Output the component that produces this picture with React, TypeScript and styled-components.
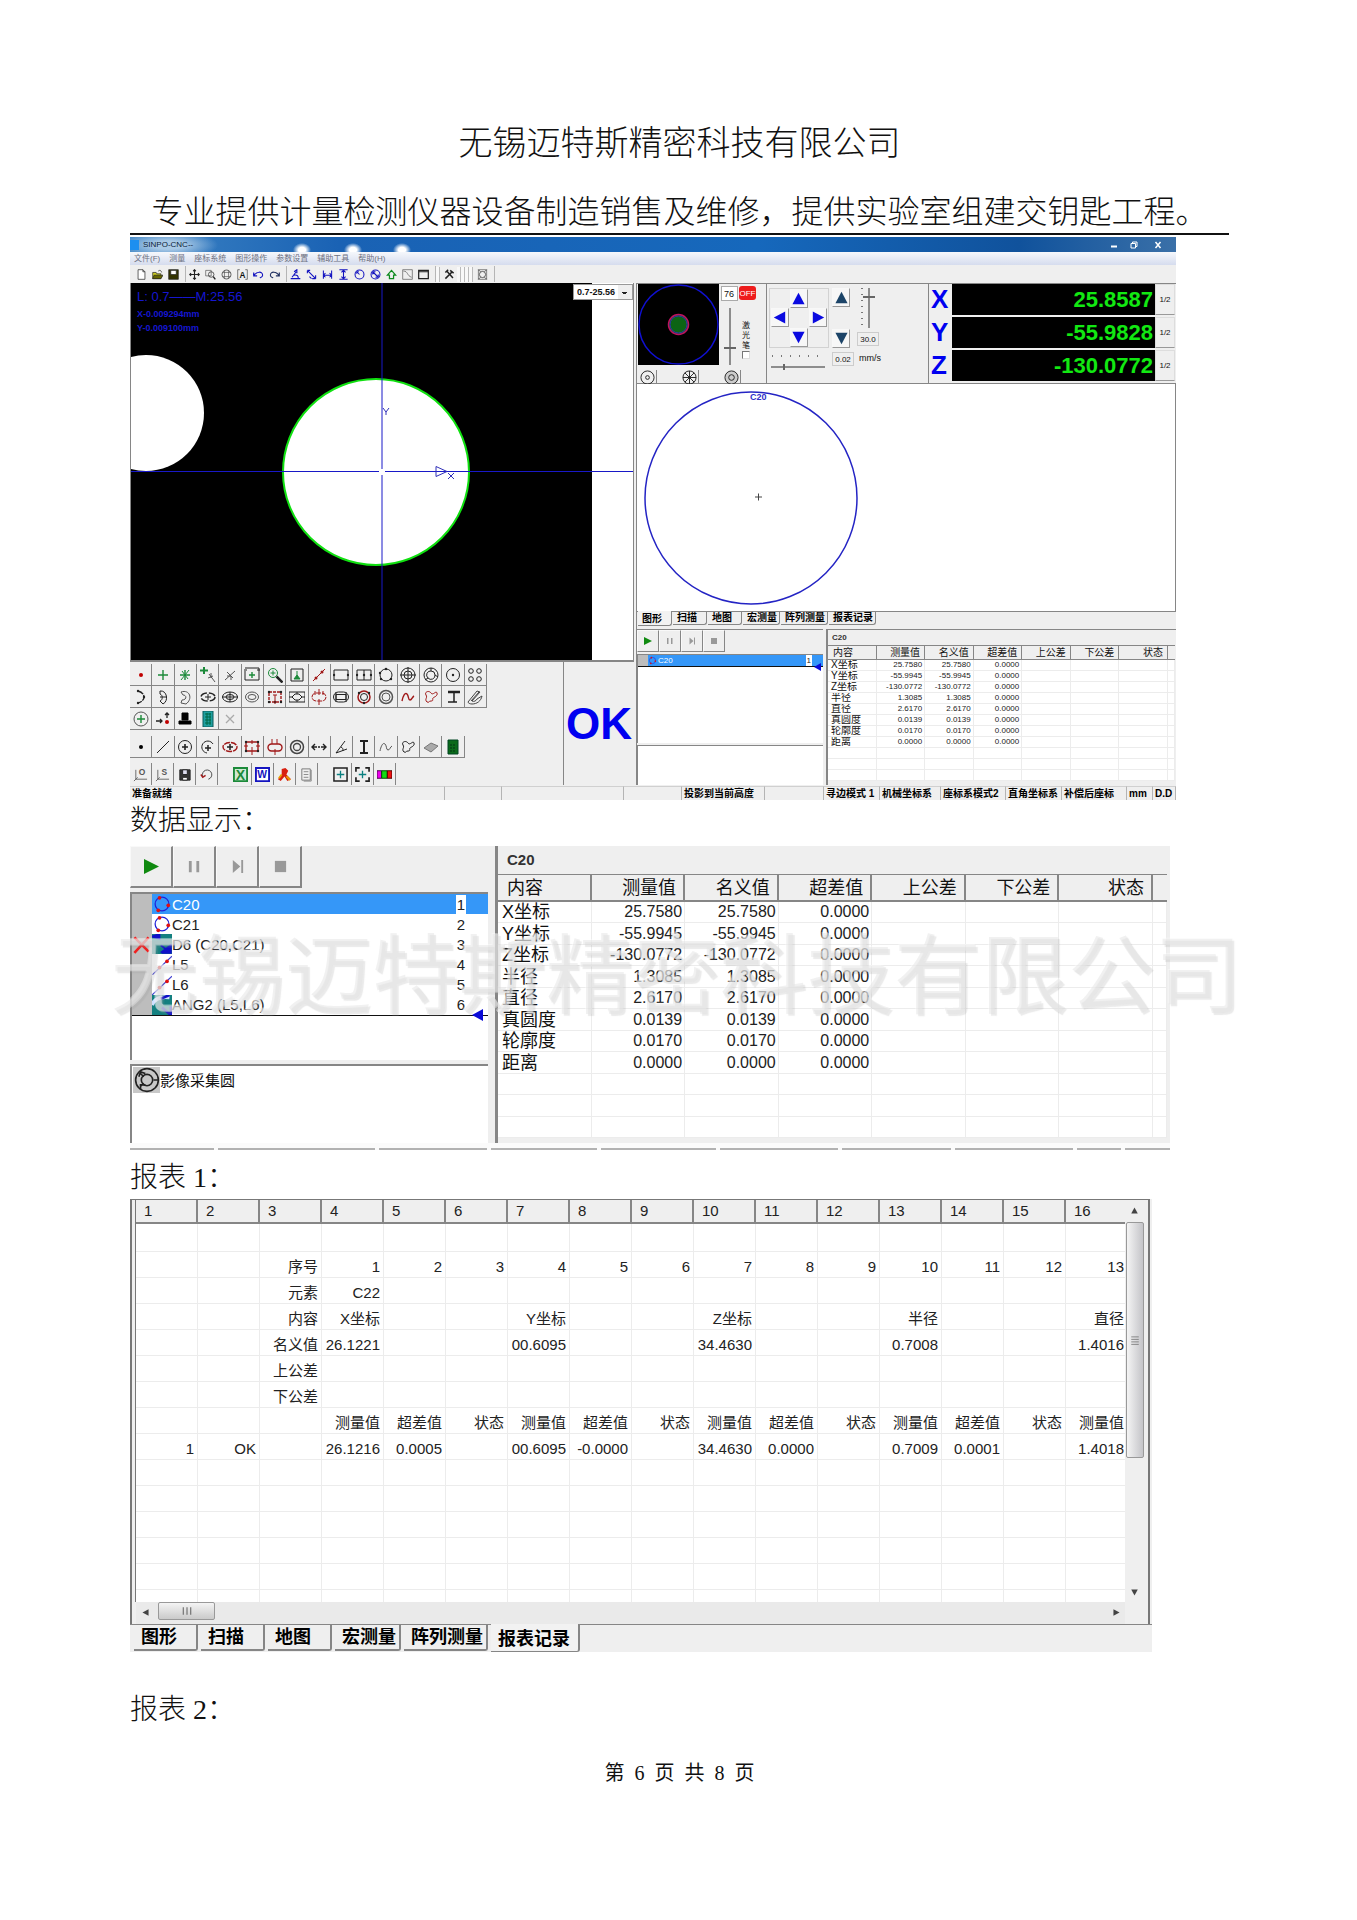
import React from "react";
import styled, { createGlobalStyle, css } from "styled-components";

const SANS = '"Liberation Sans", "Noto Sans CJK SC", sans-serif';
const SERIF = '"Liberation Serif", "Noto Sans CJK SC", serif';
const FACE = "#efefef";
const EDGE = "#868686";
const RULE = "#ececec";

const GlobalStyle = createGlobalStyle`
  *, *::before, *::after { box-sizing: border-box; }
  body { margin: 0; background: #fff; color: #111; font-family: ${SANS}; }
  button, input, select { font: inherit; color: inherit; margin: 0; padding: 0; border: 0; border-radius: 0; background: none; }
  svg { display: block; }
`;

/* ---------- page ---------- */

const Page = styled.main`
  padding: 120px 128px 132px 130px;
`;
const Letterhead = styled.header`
  border-bottom: 2px solid #111;
  margin-bottom: 2px;
  font-family: ${SERIF};
  font-weight: 300;
  text-align: center;
  white-space: nowrap;
`;
const Company = styled.h1`
  margin: 0 0 23px;
  font-size: 34px;
  line-height: 48px;
  font-weight: inherit;
`;
const Slogan = styled.p`
  margin: 0;
  font-size: 32px;
  line-height: 42px;
`;
const Caption = styled.h2<{ $before?: number; $after?: number }>`
  margin: ${(p) => p.$before ?? 0}px 0 ${(p) => p.$after ?? 0}px;
  font: 300 28px/42px ${SERIF};
`;
const PageNumber = styled.footer`
  display: flex;
  justify-content: center;
  gap: 10px;
  margin-top: 30px;
  font: 20px/24px ${SERIF};
`;

/* ---------- icons ---------- */

const K = "#222";
const R = "#a01818";
const G = "#1c8a3a";
const B = "#1414c0";

const Glyph = ({ size = 16, children }: { size?: number; children: React.ReactNode }) => (
  <svg width={size} height={size} viewBox="0 0 16 16" fill="none" stroke={K} strokeWidth={1} aria-hidden="true">
    {children}
  </svg>
);
const dots = (pts: number[][], c = K, r = 1.2) =>
  pts.map(([x, y], i) => <circle key={i} cx={x} cy={y} r={r} fill={c} stroke="none" />);

type Tool = [string, React.ReactNode];

const blob = "M4 13C1 10 5 9 3 6S6 1 8 4s5-3 6 0-3 4-4 5 1 3-2 3-1 2-4 1z";
const curve = "M2 12C3 7 5 3 7 5s1 6 3 6 2-3 4-4";
const star = "M8 5v6M5 8h6";

const rowA: Tool[] = [
  ["点", dots([[8, 8]], "#c00000", 2)],
  ["十字点", <path d="M8 3v10M3 8h10" stroke={G} strokeWidth={1.4} />],
  ["交点", <><path d="M3 8h10M8 3v10" stroke={G} strokeWidth={1.4} /><path d="M4 13l8-10M5 4l6 8" stroke={G} /></>],
  ["自动寻点", <><path d="M4 0v7M0 3.500h8" stroke={G} strokeWidth={2} /><path d="M9 7l6 8M8 11l5-2M11 6v5" stroke="#555" /></>],
  ["最近点", <path d="M3 13L13 4M5 5l6 6M5 9h4v4" stroke="#555" />],
  ["框选点", <><path d="M1 4v9h14V4M0 3h3M13 3h3M1 1h14v3" /><path d={star} stroke={G} strokeWidth={1.400} /></>],
  ["放大寻点", <><circle cx="6" cy="6" r="4.500" stroke={G} /><path d="M6 3.500v5M3.500 6h5" stroke={G} /><path d="M9.500 9.500l6 6" strokeWidth={2.500} /></>],
  ["对焦点", <><path d="M2 2h12v12H2z" /><path d="M8 4v6M5 12l3-4 3 4z" stroke={G} fill={G} /></>],
  ["直线", <><path d="M2 14L14 2" stroke={R} />{dots([[5, 11], [11, 5]], R, 1.500)}</>],
  ["框选线", <><path d="M1 3h14v10H1z" />{dots([[1, 8], [15, 8]])}</>],
  ["多段线", <><path d="M1 3h14v10H1zM8 3v10" />{dots([[1, 8], [15, 8], [8, 8]])}</>],
  ["圆", <><circle cx="8" cy="8" r="6" />{dots([[8, 2], [3, 12], [13, 12], [2, 6]])}</>],
  ["框选圆", <><circle cx="8" cy="8" r="7" /><circle cx="8" cy="8" r="4" /><path d="M8 0v16M0 8h16" /></>],
  ["采集圆", <><circle cx="8" cy="8" r="7" /><path d="M8 4a4 4 0 0 1 4 4l3 2M12 8a4 4 0 0 1-7 3l-3 2M5 11a4 4 0 0 1 3-7V1" /></>],
  ["圆心", <><circle cx="8" cy="8" r="6.500" />{dots([[8, 8]])}</>],
  ["多圆", <><circle cx="4" cy="4" r="2.300" /><circle cx="12" cy="4" r="2.300" /><circle cx="4" cy="12" r="2.300" /><circle cx="12" cy="12" r="2.300" /></>],
];
const rowB: Tool[] = [
  ["圆弧", <><path d="M5 2c8 2 8 10 0 12" strokeDasharray="6 1" strokeWidth={1.300} />{dots([[5, 2], [11, 8], [5, 14]])}</>],
  ["框选弧", <path d="M5 2c7-1 9 10 3 13l-3-3c3-1 3-6 0-7zM5 8h6" />],
  ["采集弧", <path d="M4 3c9-3 12 7 5 12l-5-1 1-3c5 0 5-5 1-5z" stroke="#555" />],
  ["椭圆", <><ellipse cx="8" cy="8" rx="7" ry="4" strokeDasharray="7 2" strokeWidth={1.500} /><path d={star} /></>],
  ["框选椭圆", <><ellipse cx="8" cy="8" rx="7.500" ry="5" /><ellipse cx="8" cy="8" rx="4" ry="2.500" /><path d="M8 3v10M0 8h16" /></>],
  ["采集椭圆", <><ellipse cx="8" cy="8" rx="6.500" ry="5" stroke="#555" /><ellipse cx="8" cy="8" rx="4" ry="2.500" stroke="#555" /></>],
  ["矩形", <><path d="M2 3h12v10H2z" stroke={R} strokeDasharray="3 1" strokeWidth={1.400} />{dots([[2, 3], [14, 3], [2, 13], [14, 13], [8, 13]])}<path d="M8 6v9M6 6h4" stroke={R} /></>],
  ["框选矩形", <><path d="M0 3h16v10H0zM3 8l3-3h4l3 3-3 3H6zM0 8h3M13 8h3M8 3v2M8 11v2" /></>],
  ["键槽", <><rect x="1" y="4" width="14" height="8" rx="4" stroke={R} strokeDasharray="5 1" /><path d="M8 0v6M8 10v6M4 2v4M12 2v4" stroke={R} /></>],
  ["框选键槽", <><rect x="0.500" y="3" width="15" height="10" rx="5" /><rect x="3" y="5.500" width="10" height="5" /><path d="M3 3v10M13 3v10" /></>],
  ["圆环", <><circle cx="8" cy="8" r="6" stroke={R} strokeWidth={1.500} /><circle cx="8" cy="8" r="3.500" />{dots([[3, 4], [13, 4], [8, 14]])}</>],
  ["同心圆", <><circle cx="8" cy="8" r="6.500" stroke="#555" strokeWidth={1.500} /><circle cx="8" cy="8" r="4" stroke="#555" /></>],
  ["曲线", <path d={curve} stroke={R} strokeWidth={1.400} />],
  ["封闭曲线", <path d={blob} stroke={R} />],
  ["高度", <><path d="M3 3h12" strokeWidth={2.500} /><path d="M9 3v10M3 13h9" strokeWidth={1.500} /></>],
  ["角度尺", <path d="M1 13l9-11 3 1-8 9c2 1 4 0 5-2l5-3c-1 5-5 8-10 8-2 0-4-1-4-2zM4 12L12 3" stroke="#444" />],
];
const rowC: Tool[] = [
  ["定位圆", <><circle cx="8" cy="8" r="7" stroke="#555" /><path d="M8 4v8M4 8h8" stroke={G} strokeWidth={1.400} /></>],
  ["移动", <><path d="M1 10h6M5 8l2 2-2 2M12 7V2M10 4l2-2 2 2" strokeWidth={1.300} />{dots([[12, 11]], "#c00000", 2)}</>],
  ["探针", <path d="M5 2h6v7h-6zM2 10h12v3H2z" fill="#000" stroke="#000" />],
  ["计算", <><path d="M3 0h10v16H3z" fill="#20a0a0" stroke="#0b5a5a" /><path d="M5 3h6M5 6h6M5 9h6M5 12h6M7 2v12M10 2v12" stroke="#064" /></>],
  ["删除", <path d="M4 4l8 8M12 4l-8 8" stroke="#aaa" strokeWidth={1.300} />],
];
const rowD: Tool[] = [
  ["构造点", dots([[8, 8]], "#000", 2)],
  ["构造线", <path d="M2 14L14 2" />],
  ["构造圆", <><circle cx="8" cy="8" r="6.500" /><path d="M8 5v6M5 8h6" strokeWidth={1.600} /></>],
  ["构造弧", <><path d="M7 14A6 6 0 1 1 13 5" /><path d="M8 6v6M5 9h6" strokeWidth={1.500} /></>],
  ["构造椭圆", <><ellipse cx="8" cy="8" rx="7" ry="4.500" stroke={R} strokeWidth={1.400} strokeDasharray="6 1" /><path d={star} strokeWidth={1.500} /></>],
  ["构造矩形", <><path d="M2 3h12v9H2z" stroke={R} strokeWidth={1.400} /><path d="M8 8v8M0 7h4M12 7h4M8 1v4" stroke={R} />{dots([[2, 3], [14, 3], [2, 12], [14, 12]])}</>],
  ["构造键槽", <><rect x="1" y="5" width="14" height="7" rx="3.500" stroke={R} strokeWidth={1.400} /><path d="M5 0v5M10 0v5M8 10v6" stroke={R} /></>],
  ["构造圆环", <><circle cx="8" cy="8" r="6.500" stroke="#444" strokeWidth={1.500} /><circle cx="8" cy="8" r="3.500" stroke="#444" strokeWidth={1.300} /></>],
  ["距离", <path d="M1 8h5M10 8h5M7 8h2M4 5L1 8l3 3M12 5l3 3-3 3" strokeWidth={1.400} />],
  ["角度", <path d="M12 2L3 14l11-4M8 8c2 1 2 2 2 4" />],
  ["高度差", <path d="M4 2h8M4 14h8M8 2v12" strokeWidth={2} />],
  ["构造曲线", <path d={curve} stroke="#555" />],
  ["构造封闭曲线", <path d={blob} />],
  ["平面", <path d="M1 9l7-5 7 3-7 6z" fill="#aaa" stroke="#777" />],
  ["计算器", <><path d="M3 1h10v14H3z" fill="#0a6a1a" stroke="#042" /><path d="M5 6h6M5 9h6M5 12h6" stroke="#031" strokeDasharray="2 1" /></>],
];
const letter = (t: string, x: number, y: number, size: number, fill: string) => (
  <text x={x} y={y} fontSize={size} fontWeight="bold" fill={fill} stroke="none" fontFamily="Liberation Sans">{t}</text>
);
const fileGroups: Tool[][] = [
  [
    ["原点", <><path d="M3 3v10h12M1 15l4-4" stroke="#666" />{letter("O", 6, 9, 9, "#555")}</>],
    ["坐标", <><path d="M3 3v10h12M1 15l4-4" stroke="#666" />{letter("S", 7, 9, 9, "#555")}</>],
    ["保存", <><path d="M3 3h11v11H3z" fill="#333" /><path d="M6 3h5v5H6z" fill="#dde" /><path d="M6 11h5v3H6z" fill="#fff" /></>],
    ["撤消", <><path d="M4 10A5 5 0 1 1 10 13" stroke="#444" /><path d="M2 8l2 3 3-2" stroke={R} strokeWidth={1.500} /></>],
  ],
  [
    ["Excel", <><path d="M1 1h14v14H1z" fill="#cfe8d4" stroke={G} strokeWidth={2} />{letter("X", 3, 14, 15, G)}</>],
    ["Word", <><path d="M1 1h14v14H1z" fill="#fff" stroke={B} strokeWidth={2} />{letter("W", 2.500, 12, 11, B)}</>],
    ["CAD", <><path d="M5 2l4-1 3 3-2 4 5 5-4 2-3-5-4 5-3-2 4-5z" fill="#d82010" stroke="none" /><path d="M10 10l4 4M2 12l3-4" stroke="#e8a000" strokeWidth={2} /></>],
    ["文本", <><path d="M3 2h9v12H3z" stroke="#777" /><path d="M5 5h5M5 8h5M5 11h5M13 3v12H5" stroke="#888" /></>],
  ],
  [
    ["取像", <><path d="M1 1h14v14H1z" strokeWidth={1.600} /><path d="M8 4v8M4 8h8" stroke="#0a8080" strokeWidth={1.400} /></>],
    ["全屏", <><path d="M1 5V1h4M11 1h4v4M15 11v4h-4M5 15H1v-4" strokeWidth={1.800} /><path d="M8 4v8M4 8h8" stroke="#0a8080" strokeWidth={1.400} /></>],
    ["颜色", <><path d="M0 4h5v8H0z" fill="#e0e" stroke="#404" /><path d="M5 4h6v8H5z" fill="#1d1" stroke="#040" /><path d="M11 4h5v8h-5z" fill="#e11" stroke="#400" /></>],
  ],
];

const mainTools: Tool[][] = [
  [
    ["新建", <path d="M3 1h7l3 3v11H3zM10 1v3h3" fill="#fff" />],
    ["打开", <><path d="M1 5h5l1 2h6v7H1z" fill="#cc2" /><path d="M3 9h13l-3 5H1z" fill="#660" /><path d="M9 3c3-2 4-1 5 2" /></>],
    ["保存", <><path d="M1 1h14v14H1z" fill="#330" /><path d="M4 2h8v6H4z" fill="#fff" /></>],
  ],
  [
    ["移动", <path d="M8 1v14M1 8h14M6 3l2-2 2 2M6 13l2 2 2-2M3 6L1 8l2 2M13 6l2 2-2 2" strokeWidth={1.600} />],
    ["框选放大", <><path d="M1 2h8v8H1z" stroke="#555" /><circle cx="9" cy="8" r="4" /><path d="M12 11l3 4" strokeWidth={2} /></>],
    ["缩放", <><circle cx="8" cy="8" r="6.500" /><path d="M2 5h12M2 11h12M5 2v12M11 2v12" stroke="#555" /></>],
    ["全部", <><path d="M4 1H1v14h3M12 1h3v14h-3" stroke="#444" />{letter("A", 3.500, 13, 12, "#111")}</>],
    ["撤消", <path d="M1 5v5h5M1 10c4-7 13-7 13-1 0 3-3 3-4 4" stroke={B} strokeWidth={1.600} />],
    ["重做", <path d="M15 5v5h-5M15 10C11 3 2 3 2 9c0 3 3 3 4 4" stroke="#203060" strokeWidth={1.600} />],
  ],
  [
    ["角度", <path d="M1 14h14M3 12l6-8M6 4l4-3v5M6 9c4-1 6 1 6 4" stroke={B} strokeWidth={1.600} />],
    ["距离", <path d="M2 2l4 4M2 2v4M2 2h4M6 6l8 8M14 14v-5M14 14H9M5 11l3 3" stroke={B} strokeWidth={1.600} />],
    ["水平距离", <path d="M2 2v12M14 2v12M2 9h12M5 6L2 9l3 3M11 6l3 3-3 3" stroke={B} strokeWidth={1.500} />],
    ["垂直距离", <path d="M2 1h12M2 15h12M8 2v12M5 5l3-3 3 3M5 11l3 3 3-3" stroke={B} strokeWidth={1.600} />],
    ["半径", <><circle cx="8" cy="8" r="6.500" stroke={B} strokeWidth={1.500} /><path d="M8 8L4 4M4 7V4h3" stroke={B} strokeWidth={1.500} /></>],
    ["直径", <><circle cx="8" cy="8" r="6.500" stroke={B} strokeWidth={1.500} /><path d="M4 4l8 8M4 8V4h4M12 8v4H8" stroke={B} strokeWidth={1.600} /></>],
    ["上移", <path d="M8 2l6 7h-3v5H5V9H2z" stroke="#0c8a1c" strokeWidth={1.800} />],
    ["曲线图", <path d="M1 1h14v14H1zM2 3c7 0 5 7 12 9" stroke="#555" />],
    ["窗口", <path d="M1 2h14v12H1zM1 4h14" strokeWidth={1.800} />],
  ],
];
const gearTool: Tool = ["设置", <path d="M2 14L12 4M4 3l9 10M9 2l5 4M2 5l4-4" strokeWidth={2.200} />];
const roundTool: Tool = ["视图", <><path d="M2 1h12v14H2z" stroke="#555" /><circle cx="8" cy="8" r="4.500" /><path d="M2 1l3 3M14 1l-3 3M2 15l3-3M14 15l-3-3" /></>];

/* ---------- application window ---------- */

const Window = styled.section`
  max-width: 1046px;
  background: ${FACE};
`;
const TitleBar = styled.div`
  display: flex;
  align-items: center;
  height: 15px;
  padding-right: 6px;
  color: #0c1c38;
  font-size: 8px;
  background:
    radial-gradient(ellipse 9px 7px at 172px 13px, #fff 40%, transparent),
    radial-gradient(ellipse 9px 7px at 223px 13px, #fff 40%, transparent),
    radial-gradient(ellipse 9px 7px at 272px 13px, #fff 40%, transparent),
    radial-gradient(ellipse 50px 14px at 38px 8px, #a9c9e6 30%, transparent),
    linear-gradient(90deg, #3d84c4, #1a62b4 20%, #1668bc 60%, #10529c 85%, #3a70a8);
`;
const AppMark = styled.span`
  width: 9px;
  height: 10px;
  margin-right: 4px;
  background: #1d8ff0;
`;
const WindowButtons = styled.div`
  display: flex;
  margin-left: auto;
  gap: 4px;
`;
const WindowButton = styled.button`
  width: 16px;
  height: 11px;
  display: grid;
  place-items: center;
`;
const CloseButton = styled(WindowButton)`
  width: 24px;
`;
const MenuBar = styled.nav`
  display: flex;
  align-items: center;
  gap: 9px;
  height: 13px;
  padding: 0 4px;
  color: #6d7080;
  font-size: 8px;
  line-height: 12px;
  background: linear-gradient(#f6f8fc, #d5dcee);
`;
const MenuItem = styled.button`
  line-height: 12px;
`;
const MainToolbar = styled.div`
  display: flex;
  align-items: center;
  height: 18px;
  padding-left: 3px;
`;
const ToolGroup = styled.div`
  display: flex;
  padding-right: 4px;
  border-right: 1px solid #b5b5b5;
`;
const ToolbarButton = styled.button`
  width: 16px;
  height: 16px;
  display: grid;
  place-items: center;
`;
const Grips = styled.span<{ $n: number }>`
  width: ${(p) => p.$n * 4}px;
  height: 15px;
  margin-right: 1px;
  background: repeating-linear-gradient(90deg, #f8f8f8 0 3px, #bbb 3px 4px);
`;
const Workspace = styled.div`
  display: grid;
  grid-template-columns: 506fr 540fr;
`;
const LeftColumn = styled.div`
  display: flex;
  flex-direction: column;
  min-width: 0;
  padding-right: 2px;
`;
const RightColumn = styled.div`
  display: flex;
  flex-direction: column;
  min-width: 0;
  border-left: 1px solid ${EDGE};
`;

const Camera = styled.div`
  position: relative;
  height: 379px;
  border: 1px solid ${EDGE};
  border-width: 0 1px 2px;
  background: #fff;
  overflow: hidden;
`;
const CameraView = styled.svg`
  width: 100%;
  height: 100%;
`;
const CameraInfo = styled.div`
  position: absolute;
  left: 6px;
  top: 7px;
  color: #1616d0;
  font-size: 9px;
  font-weight: bold;
  line-height: 14px;
`;
const ScaleRange = styled.div`
  margin-bottom: 3px;
  font-size: 13px;
  font-weight: normal;
`;
const LensSelect = styled.select`
  position: absolute;
  right: 0;
  top: 1px;
  width: 60px;
  height: 16px;
  padding-left: 3px;
  border: 1px solid #999;
  background: linear-gradient(#222, #222) right 5px center / 5px 1px no-repeat,
    linear-gradient(#222, #222) right 6px top 8px / 3px 1px no-repeat,
    linear-gradient(${FACE}, ${FACE}) right center / 14px 100% no-repeat, #fff;
  appearance: none;
  font-size: 9px;
  font-weight: bold;
  line-height: 12px;
`;

const Toolbox = styled.div`
  display: grid;
  grid-template-columns: minmax(0, 1fr) 70px;
  height: 123px;
`;
const ToolRows = styled.div`
  padding-top: 2px;
  border-right: 1px solid ${EDGE};
`;
const ToolRow = styled.div<{ $gap?: number }>`
  display: grid;
  grid-template-columns: repeat(16, minmax(0, 1fr));
  max-width: 357px;
  margin-top: ${(p) => p.$gap ?? 0}px;
`;
const ToolCell = styled.button`
  display: grid;
  place-items: center;
  height: 22px;
  border-right: 1px solid ${EDGE};
  border-bottom: 1px solid ${EDGE};
`;
const FileRow = styled.div`
  display: flex;
  gap: 12px;
  margin-top: 5px;
`;
const FileGroup = styled.div`
  display: flex;
`;
const FileCell = styled.button`
  display: grid;
  place-items: center;
  width: 22px;
  height: 22px;
  border-right: 1px solid ${EDGE};
`;
const Verdict = styled.output`
  display: grid;
  place-items: center;
  color: #0000f0;
  font-size: 44px;
  font-weight: bold;
  line-height: 48px;
`;

/* ---------- motion and readout ---------- */

const Controls = styled.div`
  display: grid;
  grid-template-columns: 130px 162px minmax(0, 1fr);
  height: 101px;
  border-top: 1px solid ${EDGE};
  border-bottom: 1px solid ${EDGE};
`;
const LightPanel = styled.div`
  display: grid;
  grid-template-columns: 81px 1fr;
  grid-template-rows: 81px 1fr;
  padding-left: 1px;
  border-right: 1px solid ${EDGE};
`;
const LightSide = styled.div`
  display: grid;
  grid-template-columns: 17px 17px;
  grid-template-rows: 18px 1fr;
  gap: 4px 1px;
  padding: 2px 0 0 2px;
`;
const LevelInput = styled.input`
  width: 17px;
  height: 15px;
  padding-left: 2px;
  border: 1px solid #aaa;
  background: #fff;
  font-size: 9px;
`;
const OffButton = styled.button`
  width: 17px;
  height: 14px;
  border-radius: 3px;
  background: #ee1c1c;
  color: #fff;
  font-size: 8px;
`;
const sliderReset = css`
  appearance: none;
  background: none;
  &::-webkit-slider-runnable-track { background: #8d8d8d; }
  &::-webkit-slider-thumb { appearance: none; background: #666; }
`;
const VerticalRange = styled.input`
  ${sliderReset}
  writing-mode: vertical-lr;
  width: 12px;
  height: 100%;
  justify-self: center;
  &::-webkit-slider-runnable-track { width: 2px; }
  &::-webkit-slider-thumb { width: 12px; height: 2px; margin-left: -5px; }
`;
const HorizontalRange = styled.input`
  ${sliderReset}
  width: 100%;
  height: 8px;
  &::-webkit-slider-runnable-track { height: 2px; }
  &::-webkit-slider-thumb { width: 2px; height: 6px; margin-top: -2px; }
`;
const LaserLabel = styled.label`
  display: flex;
  flex-direction: column;
  align-items: center;
  justify-content: flex-end;
  width: 14px;
  padding-bottom: 6px;
  font-size: 8px;
  line-height: 10px;
  text-align: center;
`;
const LaserCheck = styled.input`
  appearance: none;
  width: 8px;
  height: 8px;
  border: 1px solid #777;
  border-color: #777 #ddd #ddd #777;
  background: #fff;
`;
const LampRow = styled.div`
  grid-column: 1 / -1;
  display: flex;
  align-items: end;
`;
const LampButton = styled.button<{ $end?: boolean }>`
  display: grid;
  place-items: center;
  width: 19px;
  height: 15px;
  margin-right: ${(p) => (p.$end ? 0 : 23)}px;
  border-right: 1px solid ${EDGE};
  overflow: hidden;
`;
const JogPanel = styled.div`
  display: grid;
  grid-template-columns: 60px 22px 44px;
  grid-template-rows: 60px 1fr;
  gap: 4px 3px;
  padding: 4px 0 10px 2px;
  border-right: 1px solid ${EDGE};
`;
const JogPad = styled.div`
  display: grid;
  grid-template-columns: repeat(3, 1fr);
  border: 1px solid #d2d2d2;
  place-items: center;
`;
const JogButton = styled.button<{ $col?: number; $row?: number }>`
  grid-column: ${(p) => p.$col};
  grid-row: ${(p) => p.$row};
  display: grid;
  place-items: center;
  width: 18px;
  height: 19px;
  border: 1px solid #f8f8f8;
  border-right-color: #999;
  border-bottom-color: #999;
  background: #f7f7f7;
`;
const ZButtons = styled.div`
  display: flex;
  flex-direction: column;
  justify-content: space-between;
`;
const SpeedColumn = styled.div`
  display: grid;
  grid-template-rows: 40px 14px;
  gap: 4px;
  justify-items: center;
  width: 22px;
`;
const TickedVertical = styled.div`
  display: flex;
  gap: 1px;
  height: 40px;
  padding-left: 2px;
  background: repeating-linear-gradient(#777 0 1px, transparent 1px 6px) left top / 2px 40px no-repeat;
`;
const TickedHorizontal = styled.div`
  padding: 5px 4px 0 2px;
  background: repeating-linear-gradient(90deg, #777 0 1px, transparent 1px 9px) 3px 3px / 54px 2px no-repeat;
`;
const SmallField = styled.input`
  width: 22px;
  height: 14px;
  border: 1px solid #ccc;
  font-size: 8px;
  text-align: center;
`;
const Unit = styled.span`
  padding-left: 2px;
  font-size: 9px;
  line-height: 12px;
`;
const Readout = styled.div`
  display: grid;
  grid-template-rows: repeat(3, 31px);
  gap: 2px;
  padding: 0 1px;
`;
const AxisRow = styled.div`
  display: grid;
  grid-template-columns: 22px minmax(0, 1fr) 20px;
`;
const AxisName = styled.span`
  padding-left: 1px;
  color: #0000f0;
  font-size: 26px;
  font-weight: bold;
  line-height: 31px;
`;
const AxisValue = styled.output`
  padding-right: 2px;
  background: #000;
  color: #12e812;
  font-size: 22px;
  font-weight: bold;
  line-height: 31px;
  text-align: right;
`;
const HalfButton = styled.button`
  border: 1px solid #ddd;
  border-bottom-color: #999;
  font-size: 8px;
`;
const Drawing = styled.svg`
  width: 100%;
  height: 227px;
  border-right: 1px solid ${EDGE};
  background: #fff;
`;

/* ---------- tabs ---------- */

type Sized = { $small?: boolean };

const TabBar = styled.div<Sized>`
  display: flex;
  align-items: flex-start;
  gap: ${(p) => (p.$small ? 1 : 3)}px;
  height: ${(p) => (p.$small ? 18 : 28)}px;
  padding-left: ${(p) => (p.$small ? 1 : 4)}px;
  border-top: 1px solid ${EDGE};
  background: ${FACE};
`;
const Tab = styled.button<Sized & { $active?: boolean }>`
  min-width: ${(p) => (p.$small ? 34 : 64)}px;
  height: ${(p) => (p.$small ? 13 : 26)}px;
  padding: ${(p) => (p.$small ? "0 2px 0 4px" : "0 3px 0 7px")};
  border: 1px solid ${EDGE};
  border-width: 0 ${(p) => (p.$small ? "1px 1px" : "2px 2px")} 0;
  border-bottom-right-radius: 3px;
  color: #000;
  font-size: ${(p) => (p.$small ? 10 : 18)}px;
  font-weight: bold;
  line-height: ${(p) => (p.$small ? 12 : 24)}px;
  text-align: left;
  white-space: nowrap;
  ${(p) =>
    p.$active &&
    css`
      margin-top: -1px;
      height: ${p.$small ? 15 : 28}px;
      padding: ${p.$small ? "1px 2px 0 4px" : "2px 8px 0 7px"};
      border-bottom-width: 1px;
      background: #f2f2f2;
    `}
`;
const TABS = ["图形", "扫描", "地图", "宏测量", "阵列测量", "报表记录"];

const Tabs = ({ active, small }: { active: string; small?: boolean }) => (
  <TabBar role="tablist" $small={small}>
    {TABS.map((t) => (
      <Tab key={t} role="tab" aria-selected={t === active} $active={t === active} $small={small}>
        {t}
      </Tab>
    ))}
  </TabBar>
);

/* ---------- element list and result table ---------- */

const ResultPanel = styled.div<Sized>`
  display: grid;
  grid-template-columns: ${(p) => (p.$small ? "189fr 350fr" : "365fr 675fr")};
  height: ${(p) => (p.$small ? 156 : 297)}px;
  background: ${FACE};
`;
const ListSide = styled.div<Sized>`
  display: flex;
  flex-direction: column;
  gap: ${(p) => (p.$small ? 2 : 4)}px;
  min-width: 0;
  padding-right: ${(p) => (p.$small ? 3 : 7)}px;
`;
const Transport = styled.div<Sized>`
  display: flex;
  border-top: ${(p) => (p.$small ? 1 : 0)}px solid ${EDGE};
`;
const TransportButton = styled.button<Sized>`
  display: grid;
  place-items: center;
  width: ${(p) => (p.$small ? 22 : 43)}px;
  height: ${(p) => (p.$small ? 22 : 42)}px;
  border: 1px solid #f9f9f9;
  border-right: ${(p) => (p.$small ? 1 : 2)}px solid ${EDGE};
  border-bottom: ${(p) => (p.$small ? 1 : 2)}px solid ${EDGE};
`;
const ListBox = styled.div<Sized>`
  position: relative;
  flex: 1;
  border-left: ${(p) => (p.$small ? 1 : 2)}px solid ${EDGE};
  border-top: ${(p) => (p.$small ? 1 : 2)}px solid ${EDGE};
  background: #fff;
`;
const Elements = styled.ul<Sized & { $rows: number }>`
  display: grid;
  grid-template-rows: repeat(${(p) => p.$rows}, 1fr);
  height: ${(p) => (p.$small ? 12 : 122)}px;
  margin: 0;
  padding: 0;
  list-style: none;
  border-bottom: 1px solid #111;
`;
const Element = styled.li<Sized & { $selected?: boolean }>`
  display: grid;
  grid-template-columns: ${(p) => (p.$small ? "10px 10px 1fr auto" : "20px 20px 1fr auto")};
  align-items: center;
  padding-right: ${(p) => (p.$small ? 11 : 22)}px;
  font-size: ${(p) => (p.$small ? 8 : 15)}px;
  line-height: ${(p) => (p.$small ? 11 : 19)}px;
  color: ${(p) => (p.$selected ? "#fff" : "#222")};
  background: linear-gradient(90deg, #bdbdbd ${(p) => (p.$small ? 10 : 20)}px, ${(p) => (p.$selected ? "#3597f8" : "#fff")} 0);
`;
const Index = styled.span<{ $selected?: boolean }>`
  padding: 0 1px;
  color: #222;
  background: ${(p) => (p.$selected ? "#fff" : "none")};
`;
const InsertMark = styled.span<Sized>`
  position: absolute;
  right: ${(p) => (p.$small ? 2 : 5)}px;
  top: ${(p) => (p.$small ? 8 : 115)}px;
  border: solid transparent;
  border-width: ${(p) => (p.$small ? "4px 7px 4px 0" : "6px 11px 6px 0")};
  border-right-color: #0a0ad8;
`;
const Method = styled.div<Sized>`
  display: flex;
  align-items: flex-start;
  height: ${(p) => (p.$small ? 40 : 79)}px;
  padding: 1px;
  border-left: ${(p) => (p.$small ? 1 : 2)}px solid ${EDGE};
  border-top: ${(p) => (p.$small ? 1 : 2)}px solid ${EDGE};
  background: #fff;
  font-size: 15px;
  line-height: 27px;
`;
const MethodIcon = styled.span`
  display: grid;
  place-items: center;
  width: 27px;
  height: 26px;
  background: #c8c8c8;
`;
const TableSide = styled.div<Sized>`
  min-width: 0;
  padding-right: ${(p) => (p.$small ? 1 : 3)}px;
  border-left: ${(p) => (p.$small ? 2 : 3)}px solid ${EDGE};
  border-top: ${(p) => (p.$small ? 1 : 0)}px solid ${EDGE};
`;
const ResultTitle = styled.h3<Sized>`
  margin: 0;
  padding-left: ${(p) => (p.$small ? 4 : 9)}px;
  color: #333;
  font-size: ${(p) => (p.$small ? 8 : 15)}px;
  line-height: ${(p) => (p.$small ? 15 : 28)}px;
`;
const ResultTable = styled.table<Sized>`
  width: 100%;
  table-layout: fixed;
  border-collapse: separate;
  border-spacing: 0;
  background: #fff;
  white-space: nowrap;
  th, td {
    padding: 0;
    overflow: hidden;
    font-weight: normal;
    line-height: ${(p) => (p.$small ? 10 : 20)}px;
  }
  thead th {
    height: ${(p) => (p.$small ? 15 : 28)}px;
    padding-right: ${(p) => (p.$small ? 4 : 7)}px;
    border: solid ${EDGE};
    border-width: 1px ${(p) => (p.$small ? "1px 1px" : "2px 2px")} 0;
    background: ${FACE};
    font-size: ${(p) => (p.$small ? 10 : 18)}px;
    text-align: right;
  }
  thead th:first-child { padding-left: ${(p) => (p.$small ? 5 : 9)}px; text-align: left; }
  thead th:last-child { border-right: 0; }
  tbody th, tbody td {
    height: ${(p) => (p.$small ? 11 : 21)}px;
    border-right: 1px solid ${RULE};
    border-bottom: 1px solid ${RULE};
  }
  tbody tr:nth-child(even) th { height: ${(p) => (p.$small ? 11 : 22)}px; }
  tbody th { padding-left: ${(p) => (p.$small ? 3 : 4)}px; font-size: ${(p) => (p.$small ? 10 : 18)}px; text-align: left; }
  tbody td { padding-right: 2px; color: #222; font-size: ${(p) => (p.$small ? 8 : 16)}px; text-align: right; }
`;
const FillColumn = styled.col<Sized>`
  width: ${(p) => (p.$small ? 7 : 14)}px;
`;

const RESULT_HEAD = ["内容", "测量值", "名义值", "超差值", "上公差", "下公差", "状态", ""];
const RESULTS = [
  ["X坐标", "25.7580", "25.7580", "0.0000"],
  ["Y坐标", "-55.9945", "-55.9945", "0.0000"],
  ["Z坐标", "-130.0772", "-130.0772", "0.0000"],
  ["半径", "1.3085", "1.3085", "0.0000"],
  ["直径", "2.6170", "2.6170", "0.0000"],
  ["真圆度", "0.0139", "0.0139", "0.0000"],
  ["轮廓度", "0.0170", "0.0170", "0.0000"],
  ["距离", "0.0000", "0.0000", "0.0000"],
  [],
  [],
  [],
];

const circleIcon = <><circle cx="8" cy="8" r="5.500" stroke="#2020d8" />{dots([[6, 3], [13, 9], [5, 13]], "#e01010", 1.500)}</>;
const lineIcon = <><path d="M0 16L16 1" stroke="#4040d0" />{dots([[6, 10], [12, 5]], "#e01010", 1.500)}</>;
const distIcon = <><path d="M-2-2h20v20H-2z" fill="#148080" stroke="none" /><path d="M0 2l6-2v4zM7 9l8 6M15 8v7H8M7 15l8-6" stroke="#1010c8" fill="#1010c8" strokeWidth={1.500} /></>;
const angleIcon = <><path d="M-2-2h20v20H-2z" fill="#148080" stroke="none" /><path d="M0 8c2-5 6-7 14-6" stroke="#cfe0ff" strokeWidth={3} /><path d="M7 3l7-3M8 10l7 6M15 9v7" stroke="#1010c8" strokeWidth={2} /></>;

type ElementRow = { name: string; icon: React.ReactNode; error?: boolean };
const ELEMENTS: ElementRow[] = [
  { name: "C20", icon: circleIcon },
  { name: "C21", icon: circleIcon },
  { name: "D6 (C20,C21)", icon: distIcon, error: true },
  { name: "L5", icon: lineIcon },
  { name: "L6", icon: lineIcon },
  { name: "ANG2 (L5,L6)", icon: angleIcon },
];
const transport: Tool[] = [
  ["运行", <path d="M0 0l16 8-16 8z" fill="#108a10" stroke="none" />],
  ["暂停", <path d="M2 2h3v12H2zM10 2h3v12h-3z" fill="#999" stroke="none" />],
  ["单步", <path d="M3 1l8 7-8 7zM12 1h2v14h-2z" fill="#999" stroke="none" />],
  ["停止", <path d="M2 2h12v12H2z" fill="#999" stroke="none" />],
];

const Results = ({ rows, method, small }: { rows: ElementRow[]; method?: string; small?: boolean }) => (
  <ResultPanel $small={small}>
    <ListSide $small={small}>
      <Transport $small={small}>
        {transport.map(([name, icon]) => (
          <TransportButton key={name} aria-label={name} $small={small}>
            <Glyph size={small ? 8 : 15}>{icon}</Glyph>
          </TransportButton>
        ))}
      </Transport>
      <ListBox $small={small}>
        <Elements $small={small} $rows={rows.length}>
          {rows.map((r, i) => (
            <Element key={r.name} $small={small} $selected={i === 0}>
              {r.error ? <Glyph size={19}><path d="M2 2l12 12M14 2L2 15" stroke="#f02020" strokeWidth={2.200} /></Glyph> : <span />}
              <Glyph size={small ? 9 : 20}>{r.icon}</Glyph>
              <span>{r.name}</span>
              <Index $selected={i === 0}>{i + 1}</Index>
            </Element>
          ))}
        </Elements>
        <InsertMark $small={small} />
      </ListBox>
      <Method $small={small}>
        {method && (
          <>
            <MethodIcon>
              <Glyph size={26}>
                <circle cx="8" cy="8" r="7" />
                <circle cx="8" cy="8" r="3.500" />
                <path d="M4 4l2 2M4 12l2-2M12 8h3M3 6l1-3 3 1M4 14v-3h3" />
              </Glyph>
            </MethodIcon>
            {method}
          </>
        )}
      </Method>
    </ListSide>
    <TableSide $small={small}>
      <ResultTitle $small={small}>C20</ResultTitle>
      <ResultTable $small={small}>
        <colgroup>
          {RESULT_HEAD.slice(1).map((_, i) => <col key={i} />)}
          <FillColumn $small={small} />
        </colgroup>
        <thead>
          <tr>{RESULT_HEAD.map((h, i) => <th key={i} scope="col">{h}</th>)}</tr>
        </thead>
        <tbody>
          {RESULTS.map((r, i) => (
            <tr key={i}>
              <th scope="row">{r[0]}</th>
              {RESULT_HEAD.slice(1).map((_, j) => <td key={j}>{r[j + 1]}</td>)}
            </tr>
          ))}
        </tbody>
      </ResultTable>
    </TableSide>
  </ResultPanel>
);

/* ---------- status bar ---------- */

const StatusBar = styled.div`
  display: grid;
  grid-template-columns: 315fr 57fr 122fr 58fr 83fr 59fr 56fr 61fr 65fr 56fr 65fr 26fr 23fr;
  height: 15px;
  padding-top: 1px;
  color: #000;
  font-size: 10px;
  font-weight: bold;
  line-height: 13px;
  white-space: nowrap;
`;
const Status = styled.span`
  min-width: 0;
  padding-left: 2px;
  border-top: 1px solid #d0d0d0;
  border-right: 1px solid #b4b4b4;
`;
const STATUS = [
  "准备就绪", "", "", "", "投影到当前高度", "", "寻边模式 1",
  "机械坐标系", "座标系模式2", "直角坐标系", "补偿后座标", "mm", "D.D",
];

/* ---------- enlarged data view ---------- */

const DataView = styled.section`
  position: relative;
  max-width: 1040px;
  background: ${FACE};
`;
const Watermark = styled.div`
  position: absolute;
  left: -19px;
  top: 73px;
  color: rgba(228, 228, 228, 0.5);
  font: 87px/100px "Noto Sans CJK SC", sans-serif;
  text-shadow: 2px 2px 1px rgba(150, 150, 150, 0.2), -1px -1px 0 rgba(255, 255, 255, 0.4);
  white-space: nowrap;
  pointer-events: none;
`;
const CutStatus = styled.div`
  display: flex;
  gap: 4px;
  padding-top: 5px;
  height: 7px;
  background: #fbfbfb;
`;
const CutSegment = styled.span<{ $w: number }>`
  flex: ${(p) => p.$w} 1 0;
  height: 2px;
  background: #b2b2b2;
`;

/* ---------- report ---------- */

const Report = styled.section`
  max-width: 1022px;
  background: ${FACE};
`;
const ReportFrame = styled.div`
  display: grid;
  grid-template-columns: minmax(0, 1fr) 19px;
  grid-template-rows: 402px 22px;
  margin-right: 2px;
  padding-right: 4px;
  border: solid #777;
  border-width: 1px 2px 0 2px;
`;
const ReportGrid = styled.div`
  margin-left: 3px;
  border-left: 1px solid #777;
  overflow: hidden;
  background: #fff;
`;
const ReportTable = styled.table`
  width: 992px;
  table-layout: fixed;
  border-collapse: separate;
  border-spacing: 0;
  color: #222;
  font-size: 15px;
  white-space: nowrap;
  th, td { padding: 0; font-weight: normal; overflow: hidden; }
  thead th {
    height: 24px;
    padding-left: 8px;
    border: solid ${EDGE};
    border-width: 0 2px 2px 0;
    background: ${FACE};
    font-size: 15px;
    line-height: 20px;
    text-align: left;
  }
  tbody td {
    height: 26px;
    padding: 4px 3px 0 0;
    border-right: 1px solid ${RULE};
    border-bottom: 1px solid ${RULE};
    line-height: 20px;
    text-align: right;
  }
  tbody tr:first-child td { height: 28px; }
`;
const VScroll = styled.div`
  display: flex;
  flex-direction: column;
  align-items: center;
  background: ${FACE};
`;
const HScroll = styled.div`
  display: flex;
  align-items: flex-start;
  margin-left: 4px;
  background: #eaeaea;
`;
const ArrowButton = styled.button`
  display: grid;
  place-items: center;
  width: 18px;
  height: 20px;
  flex: none;
`;
const Thumb = styled.div<{ $vertical?: boolean }>`
  display: grid;
  place-items: center;
  border: 1px solid #999;
  border-radius: 2px;
  ${(p) =>
    p.$vertical
      ? css`width: 18px; height: 236px; margin-top: 2px; background: linear-gradient(90deg, #f4f4f4, #c4c4c8);`
      : css`width: 57px; height: 18px; margin-left: 4px; background: linear-gradient(#f4f4f4, #cacaca);`}
`;
const Spacer = styled.div`
  flex: 1;
`;

const row = (cells: Record<number, string>) => Array.from({ length: 16 }, (_, i) => cells[i + 1] ?? "");
const numbering: Record<number, string> = { 3: "序号" };
for (let i = 1; i <= 13; i++) numbering[i + 3] = String(i);
const headings: Record<number, string> = {};
["测量值", "超差值", "状态"].forEach((h, k) => {
  for (let c = 4 + k; c <= 16; c += 3) headings[c] = h;
});
const REPORT = [
  row({}),
  row(numbering),
  row({ 3: "元素", 4: "C22" }),
  row({ 3: "内容", 4: "X坐标", 7: "Y坐标", 10: "Z坐标", 13: "半径", 16: "直径" }),
  row({ 3: "名义值", 4: "26.1221", 7: "00.6095", 10: "34.4630", 13: "0.7008", 16: "1.4016" }),
  row({ 3: "上公差" }),
  row({ 3: "下公差" }),
  row(headings),
  row({ 1: "1", 2: "OK", 4: "26.1216", 5: "0.0005", 7: "00.6095", 8: "-0.0000", 10: "34.4630", 11: "0.0000", 13: "0.7009", 14: "0.0001", 16: "1.4018" }),
  ...Array.from({ length: 6 }, () => row({})),
];

const MENU = ["文件(F)", "测量", "座标系统", "图形操作", "参数设置", "辅助工具", "帮助(H)"];
const AXES = [["X", "25.8587"], ["Y", "-55.9828"], ["Z", "-130.0772"]];

const ToolbarTool = ({ tool: [name, icon] }: { tool: Tool }) => (
  <ToolbarButton aria-label={name}><Glyph size={11}>{icon}</Glyph></ToolbarButton>
);
const ToolStrip = ({ tools, gap }: { tools: Tool[]; gap?: number }) => (
  <ToolRow $gap={gap}>
    {tools.map(([name, icon]) => (
      <ToolCell key={name} aria-label={name}><Glyph>{icon}</Glyph></ToolCell>
    ))}
  </ToolRow>
);
const Arrow = ({ turn = 0, size = 13, color = "#0a0ae0" }) => (
  <svg width={size} height={size} viewBox="0 0 16 16" aria-hidden="true">
    <path d="M8 1l7.500 14H.5z" fill={color} transform={`rotate(${turn} 8 8)`} />
  </svg>
);

export default function App() {
  return (
    <Page>
      <GlobalStyle />
      <Letterhead>
        <Company>无锡迈特斯精密科技有限公司</Company>
        <Slogan>专业提供计量检测仪器设备制造销售及维修，提供实验室组建交钥匙工程。</Slogan>
      </Letterhead>

      <Window>
        <TitleBar>
          <AppMark />
          SINPO-CNC--
          <WindowButtons>
            <WindowButton aria-label="最小化"><Glyph size={8}><path d="M2 11h12" stroke="#fff" strokeWidth={4} /></Glyph></WindowButton>
            <WindowButton aria-label="还原"><Glyph size={8}><path d="M2 5h9v9H2zM5 4V2h9v9h-2" stroke="#fff" strokeWidth={2} /></Glyph></WindowButton>
            <CloseButton aria-label="关闭"><Glyph size={8}><path d="M3 2l10 12M13 2L3 14" stroke="#fff" strokeWidth={3} /></Glyph></CloseButton>
          </WindowButtons>
        </TitleBar>
        <MenuBar>{MENU.map((m) => <MenuItem key={m}>{m}</MenuItem>)}</MenuBar>
        <MainToolbar>
          {mainTools.map((group, i) => (
            <ToolGroup key={i}>{group.map((t) => <ToolbarTool key={t[0]} tool={t} />)}</ToolGroup>
          ))}
          <Grips $n={1} />
          <ToolbarTool tool={gearTool} />
          <Grips $n={4} />
          <ToolGroup><ToolbarTool tool={roundTool} /></ToolGroup>
        </MainToolbar>

        <Workspace>
          <LeftColumn>
            <Camera>
              <CameraView viewBox="0 0 502 377" preserveAspectRatio="xMinYMin slice" fill="none">
                <path d="M0 0h461v377H0z" fill="#000" />
                <circle cx="15" cy="130" r="58" fill="#fff" />
                <circle cx="245" cy="189" r="93" fill="#fff" stroke="#10e010" strokeWidth="2" />
                <path d="M251 0v186M251 192v185M0 188.500h248M254 188.500h248" stroke="#1818c8" />
                <path d="M305 183.500v10l11-5z" stroke="#3030b8" />
                <path d="M252 125l3 4 3-4M255 129v3M317 190l6 6M323 190l-6 6" stroke="#3030b8" />
              </CameraView>
              <CameraInfo>
                <ScaleRange>L: 0.7——M:25.56</ScaleRange>
                <div>X-0.009294mm</div>
                <div>Y-0.009100mm</div>
              </CameraInfo>
              <LensSelect aria-label="镜头倍率" defaultValue="0.7-25.56"><option>0.7-25.56</option></LensSelect>
            </Camera>
            <Toolbox>
              <ToolRows>
                <ToolStrip tools={rowA} />
                <ToolStrip tools={rowB} />
                <ToolStrip tools={rowC} />
                <ToolStrip tools={rowD} gap={6} />
                <FileRow>
                  {fileGroups.map((g, i) => (
                    <FileGroup key={i}>
                      {g.map(([name, icon]) => <FileCell key={name} aria-label={name}><Glyph size={15}>{icon}</Glyph></FileCell>)}
                    </FileGroup>
                  ))}
                </FileRow>
              </ToolRows>
              <Verdict>OK</Verdict>
            </Toolbox>
          </LeftColumn>

          <RightColumn>
            <Controls>
              <LightPanel>
                <svg width="81" height="81" viewBox="0 0 81 81" aria-label="光源">
                  <path d="M0 0h81v81H0z" fill="#000" />
                  <circle cx="40.500" cy="40.500" r="39.500" fill="none" stroke="#1010d0" strokeWidth="1.500" />
                  <circle cx="40.500" cy="40.500" r="10" fill="#0c6414" stroke="#c01060" strokeWidth="1.500" />
                  <circle cx="40.500" cy="40.500" r="8.500" fill="none" stroke="#3030b0" />
                </svg>
                <LightSide>
                  <LevelInput aria-label="亮度" defaultValue="76" />
                  <OffButton>OFF</OffButton>
                  <VerticalRange type="range" aria-label="亮度调节" defaultValue="70" />
                  <LaserLabel>激光笔<LaserCheck type="checkbox" /></LaserLabel>
                </LightSide>
                <LampRow>
                  <LampButton aria-label="环形光"><Glyph size={15}><circle cx="8" cy="8" r="7" /><circle cx="8" cy="8" r="2" /></Glyph></LampButton>
                  <LampButton aria-label="分区光"><Glyph size={15}><circle cx="8" cy="8" r="7" /><path d="M8 1v14M1 8h14M3 3l10 10M13 3L3 13" /></Glyph></LampButton>
                  <LampButton $end aria-label="底光"><Glyph size={15}><circle cx="8" cy="8" r="7" fill="#ccc" /><circle cx="8" cy="8" r="3" /></Glyph></LampButton>
                </LampRow>
              </LightPanel>
              <JogPanel>
                <JogPad>
                  <JogButton aria-label="Y+" $col={2} $row={1}><Arrow /></JogButton>
                  <JogButton aria-label="X-" $col={1} $row={2}><Arrow turn={-90} /></JogButton>
                  <JogButton aria-label="X+" $col={3} $row={2}><Arrow turn={90} /></JogButton>
                  <JogButton aria-label="Y-" $col={2} $row={3}><Arrow turn={180} /></JogButton>
                </JogPad>
                <ZButtons>
                  <JogButton aria-label="Z+"><Arrow color="#1c4468" /></JogButton>
                  <JogButton aria-label="Z-"><Arrow turn={180} color="#1c4468" /></JogButton>
                </ZButtons>
                <SpeedColumn>
                  <TickedVertical><VerticalRange type="range" aria-label="速度" defaultValue="22" /></TickedVertical>
                  <SmallField aria-label="速度值" defaultValue="30.0" />
                </SpeedColumn>
                <TickedHorizontal><HorizontalRange type="range" aria-label="步进" defaultValue="24" /></TickedHorizontal>
                <SmallField aria-label="步进值" defaultValue="0.02" />
                <Unit>mm/s</Unit>
              </JogPanel>
              <Readout>
                {AXES.map(([axis, value]) => (
                  <AxisRow key={axis}>
                    <AxisName>{axis}</AxisName>
                    <AxisValue>{value}</AxisValue>
                    <HalfButton>1/2</HalfButton>
                  </AxisRow>
                ))}
              </Readout>
            </Controls>
            <Drawing viewBox="0 0 538 227" preserveAspectRatio="xMinYMin meet" fill="none">
              <circle cx="114" cy="114" r="106" stroke="#2424c4" strokeWidth="1.500" />
              <path d="M121.500 109.500v7M118 113h7" stroke="#444" />
              <text x="113" y="16" fontSize="9" fontWeight="bold" fill="#3030c8" fontFamily="Liberation Sans">C20</text>
            </Drawing>
            <Tabs small active="图形" />
            <Results small rows={ELEMENTS.slice(0, 1)} />
          </RightColumn>
        </Workspace>
        <StatusBar>{STATUS.map((t, i) => <Status key={i}>{t}</Status>)}</StatusBar>
      </Window>

      <Caption $after={4}>数据显示：</Caption>
      <DataView>
        <Results rows={ELEMENTS} method="影像采集圆" />
        <CutStatus>
          {[84, 158, 108, 107, 115, 119, 109, 119, 44, 45].map((w, i) => <CutSegment key={i} $w={w} />)}
        </CutStatus>
        <Watermark aria-hidden="true">无锡迈特斯精密科技有限公司</Watermark>
      </DataView>

      <Caption $before={7}>报表 1：</Caption>
      <Report>
        <ReportFrame>
          <ReportGrid>
            <ReportTable>
              <thead>
                <tr>{Array.from({ length: 16 }, (_, i) => <th key={i} scope="col">{i + 1}</th>)}</tr>
              </thead>
              <tbody>
                {REPORT.map((cells, i) => (
                  <tr key={i}>{cells.map((c, j) => <td key={j}>{c}</td>)}</tr>
                ))}
              </tbody>
            </ReportTable>
          </ReportGrid>
          <VScroll>
            <ArrowButton aria-label="向上"><Arrow size={7} color="#444" /></ArrowButton>
            <Thumb $vertical><Glyph size={10}><path d="M2 3h12M2 7h12M2 11h12M2 15h12" stroke="#555" /></Glyph></Thumb>
            <Spacer />
            <ArrowButton aria-label="向下"><Arrow size={7} turn={180} color="#444" /></ArrowButton>
          </VScroll>
          <HScroll>
            <ArrowButton aria-label="向左"><Arrow size={7} turn={-90} color="#444" /></ArrowButton>
            <Thumb><Glyph size={10}><path d="M2 2v12M8 2v12M14 2v12" stroke="#555" strokeWidth={1.500} /></Glyph></Thumb>
            <Spacer />
            <ArrowButton aria-label="向右"><Arrow size={7} turn={90} color="#444" /></ArrowButton>
          </HScroll>
        </ReportFrame>
        <Tabs active="报表记录" />
      </Report>

      <Caption $before={37}>报表 2：</Caption>
      <PageNumber>
        <span>第</span><span>6</span><span>页</span><span>共</span><span>8</span><span>页</span>
      </PageNumber>
    </Page>
  );
}
